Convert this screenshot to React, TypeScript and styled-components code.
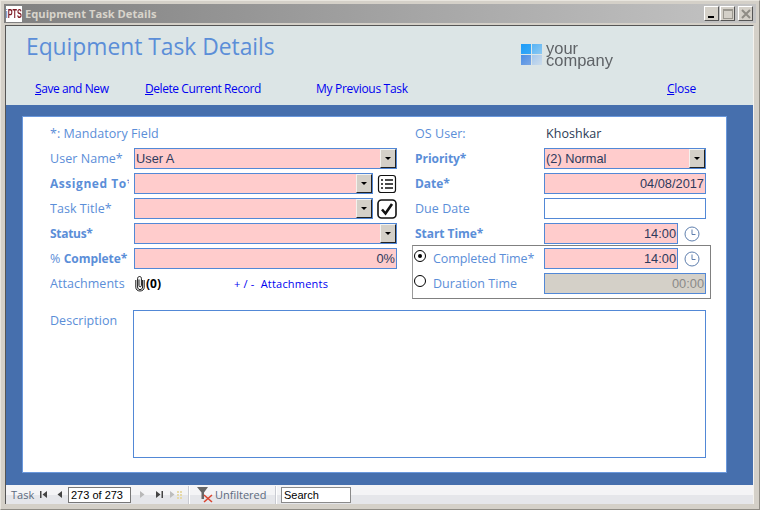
import React from 'react';
import styled, { createGlobalStyle } from 'styled-components';

const GlobalStyle = createGlobalStyle`
  html, body {
    margin: 0;
    padding: 0;
    background: #d4d0c8;
  }
`;

const uiFont = `"Open Sans", "Noto Sans", sans-serif`;
const fieldFont = `"Liberation Sans", Arial, sans-serif`;
const labelBlue = '#5b8ed8';
const fieldBorder = '#5288d6';

const Window = styled.div`
  width: 760px;
  height: 510px;
  box-sizing: border-box;
  display: flex;
  flex-direction: column;
  background: #d4d0c8;
  border: 1px solid #8f8c85;
  border-top-color: #e8e5de;
  border-left-color: #e8e5de;
  padding: 3px 3px 5px 3px;
  overflow: hidden;
`;

const TitleBar = styled.div`
  height: 19px;
  flex: none;
  display: flex;
  align-items: center;
  padding: 0 3px 0 2px;
  background: linear-gradient(90deg, #808080, #c4c4c4);
`;

const AppIcon = styled.div`
  width: 16px;
  height: 16px;
  flex: none;
  background: #fff;
  color: #7a1420;
  font: 700 11px/16px ${fieldFont};
  text-align: center;
  overflow: hidden;
  white-space: nowrap;
  display: flex;
  justify-content: center;
`;

const AppIconText = styled.span`
  display: inline-block;
  flex: none;
  transform: scale(0.66, 1.1);
  b {
    color: #1c4fa8;
    font-weight: 400;
  }
`;

const WindowTitle = styled.div`
  margin-left: 3px;
  color: #d8d4cb;
  font: 700 11.2px/19px "Open Sans", sans-serif;
  flex: 1;
`;

const WindowButton = styled.div<{ $gap?: number }>`
  width: 15px;
  height: 15px;
  margin-left: ${(p) => p.$gap ?? 0}px;
  box-sizing: border-box;
  background: #d4d0c8;
  border: 1px solid;
  border-color: #fff #555 #555 #fff;
  display: flex;
  align-items: center;
  justify-content: center;
`;

const Frame = styled.div`
  flex: 1;
  min-height: 0;
  margin: 2px 2px 0 1px;
  display: flex;
  flex-direction: column;
  border-top: 1px solid #555;
  border-left: 1px solid #555;
  border-right: 1px solid #f4f2ee;
`;

const Header = styled.header`
  height: 79px;
  flex: none;
  box-sizing: border-box;
  background: #dce5e6;
  display: flex;
  flex-direction: column;
`;

const HeaderTop = styled.div`
  height: 47px;
  flex: none;
  display: flex;
  padding-left: 20px;
`;

const PageTitle = styled.h1`
  margin: 0;
  width: 495px;
  flex: none;
  color: #5b8ed8;
  font: 400 22.8px/42px ${uiFont};
`;

const Logo = styled.div`
  display: flex;
  align-items: center;
  gap: 4px;
  margin-top: 13px;
  height: 30px;
  filter: blur(0.35px);
`;

const LogoMark = styled.div`
  display: grid;
  grid-template-columns: 10px 10px;
  grid-template-rows: 10px 10px;
  gap: 1px;
  width: 21px;
`;

const LogoCell = styled.span<{ $from: string; $to: string }>`
  background: linear-gradient(135deg, ${(p) => p.$from}, ${(p) => p.$to});
`;

const LogoText = styled.div`
  width: 68px;
  color: #5f6367;
  font: 400 16.5px/12.5px ${fieldFont};
`;

const Nav = styled.nav`
  display: grid;
  grid-template-columns: 110px 171px 351px auto;
  padding: 6px 0 0 29px;
`;

const NavLink = styled.a<{ $spacing?: number }>`
  color: #0000f0;
  font: 400 12px/20px ${uiFont};
  letter-spacing: ${(p) => p.$spacing ?? -0.43}px;
  white-space: nowrap;
  cursor: pointer;
  u {
    text-decoration: underline;
  }
`;

const Body = styled.main`
  flex: 1;
  min-height: 0;
  background: #466fad;
  padding: 11px 26px 12px 16px;
`;

const Card = styled.section`
  height: 100%;
  box-sizing: border-box;
  background: #fff;
  border: 1px solid #6a98dc;
  padding: 6px 20px 14px 27px;
  display: flex;
  flex-direction: column;
`;

const Columns = styled.div`
  display: grid;
  grid-template-columns: 347px 291px;
  column-gap: 18px;
`;

const Column = styled.div`
  display: flex;
  flex-direction: column;
  gap: 4px;
`;

const Row = styled.div`
  height: 21px;
  display: flex;
  align-items: center;
`;

const Label = styled.div<{ $w: number; $bold?: boolean; $spacing?: number }>`
  width: ${(p) => p.$w}px;
  flex: none;
  overflow: hidden;
  white-space: nowrap;
  color: ${labelBlue};
  font: ${(p) => (p.$bold ? '700 12px' : '400 12.5px')}/21px ${uiFont};
  letter-spacing: ${(p) => p.$spacing ?? (p.$bold ? -0.05 : 0.05)}px;
  b {
    font-size: 12px;
    letter-spacing: -0.05px;
  }
`;

const Field = styled.div<{ $fill?: string; $right?: boolean; $w?: number; $muted?: boolean }>`
  box-sizing: border-box;
  height: 21px;
  ${(p) => (p.$w ? `width: ${p.$w}px; flex: none;` : 'flex: 1;')}
  min-width: 0;
  display: flex;
  align-items: center;
  justify-content: ${(p) => (p.$right ? 'flex-end' : 'flex-start')};
  background: ${(p) => p.$fill ?? '#ffcccc'};
  border: 1px solid ${fieldBorder};
  padding: 0 0 0 1px;
  padding-right: ${(p) => (p.$right ? 1 : 0)}px;
  color: ${(p) => (p.$muted ? '#8a8a88' : '#2e3a5c')};
  font: 400 12.8px/19px ${fieldFont};
  position: relative;
`;

const ComboButton = styled.div`
  position: absolute;
  top: 0;
  right: 0;
  width: 16px;
  height: 19px;
  box-sizing: border-box;
  background: #d4d0c8;
  border-right: 1px solid #222;
  border-bottom: 1px solid #222;
  border-top: 1px solid #f4f2ee;
  border-left: 1px solid #f4f2ee;
  display: flex;
  align-items: center;
  justify-content: center;
  &::after {
    content: '';
    width: 0;
    height: 0;
    border-left: 3px solid transparent;
    border-right: 3px solid transparent;
    border-top: 3px solid #000;
  }
`;

const SideIcon = styled.svg`
  flex: none;
  margin-left: 4px;
  display: block;
`;

const ClockSlot = styled.svg`
  flex: none;
  margin-left: 6px;
  display: block;
`;

const ReadOnly = styled.div`
  margin-left: 2px;
  color: #2b3a55;
  font: 400 12.5px/21px ${uiFont};
  letter-spacing: 0.05px;
`;

const AttachCount = styled.div`
  width: 100px;
  flex: none;
  display: flex;
  align-items: center;
  color: #000;
  font: 700 12px/21px ${uiFont};
`;

const AttachLink = styled.a`
  color: #0000f0;
  font: 400 11px/21px ${uiFont};
  white-space: pre;
  letter-spacing: 0.2px;
`;

const TimeGroup = styled.div`
  margin: -3px -5px 0 -3px;
  padding: 2px 4px 4px 1px;
  border: 1px solid #808080;
  border-left-color: #9a9a9a;
  display: flex;
  flex-direction: column;
  gap: 4px;
`;

const Radio = styled.span<{ $on?: boolean }>`
  width: 12px;
  height: 12px;
  flex: none;
  box-sizing: border-box;
  margin: -6px 7px 0 0;
  border-radius: 50%;
  border: 1px solid #000;
  background: #fff;
  display: flex;
  align-items: center;
  justify-content: center;
  &::after {
    content: '';
    width: 4px;
    height: 4px;
    border-radius: 50%;
    background: ${(p) => (p.$on ? '#000' : 'transparent')};
  }
`;

const DescriptionRow = styled.div`
  margin-top: 11px;
  display: flex;
  flex: 1;
  min-height: 0;
`;

const DescriptionBox = styled.div`
  flex: none;
  width: 573px;
  box-sizing: border-box;
  border: 1px solid ${fieldBorder};
  background: #fff;
`;

const Footer = styled.footer`
  height: 19px;
  flex: none;
  display: flex;
  align-items: center;
  background: linear-gradient(180deg, #f4f4f6 0 50%, #e5e6ea 50% 100%);
  color: #5c6a7e;
  font: 400 11px/19px ${uiFont};
`;

const FooterLabel = styled.span`
  margin-left: 5px;
  width: 28px;
  flex: none;
`;

const NavIcon = styled.svg<{ $w?: number }>`
  width: ${(p) => p.$w ?? 9}px;
  height: 9px;
  flex: none;
  display: block;
`;

const RecordBox = styled.div<{ $w: number; $border: string }>`
  box-sizing: border-box;
  width: ${(p) => p.$w}px;
  height: 16px;
  flex: none;
  background: #fff;
  border: 1px solid ${(p) => p.$border};
  color: #000;
  font: 400 11px/14px ${fieldFont};
  padding-left: 2px;
`;

const FooterDivider = styled.span`
  width: 1px;
  height: 18px;
  flex: none;
  background: #c9cbd2;
  border-right: 1px solid #fff;
`;

const FilterText = styled.span`
  width: 60px;
  flex: none;
`;

const FilterIcon = styled.svg`
  flex: none;
  display: block;
`;

const Spacer = styled.span<{ $w: number }>`
  width: ${(p) => p.$w}px;
  height: 1px;
  flex: none;
`;

const Clock = () => (
  <ClockSlot width="16" height="16" viewBox="0 0 16 16" fill="none" stroke="#5f7fae" strokeWidth="1">
    <circle cx="8" cy="8" r="7" />
    <path d="M8 3.5V8.5H11.5" />
  </ClockSlot>
);

const Combo = ({ value }: { value?: string }) => (
  <Field>
    {value}
    <ComboButton />
  </Field>
);

function App() {
  return (
    <>
      <GlobalStyle />
      <Window>
        <TitleBar>
          <AppIcon>
            <AppIconText>
              <b>i</b>PTS
            </AppIconText>
          </AppIcon>
          <WindowTitle>Equipment Task Details</WindowTitle>
          <WindowButton>
            <svg width="9" height="9" viewBox="0 0 9 9">
              <rect x="1" y="7" width="6" height="2" fill="#000" />
            </svg>
          </WindowButton>
          <WindowButton $gap={1}>
            <svg width="10" height="10" viewBox="0 0 10 10" fill="none" stroke="#9a978f">
              <rect x="0.5" y="0.5" width="9" height="9" />
              <path d="M0 1.5H10" />
            </svg>
          </WindowButton>
          <WindowButton $gap={3}>
            <svg width="10" height="10" viewBox="0 0 10 10" stroke="#8f8c85" strokeWidth="2">
              <path d="M1 1L9 9M9 1L1 9" />
            </svg>
          </WindowButton>
        </TitleBar>
        <Frame>
          <Header>
            <HeaderTop>
              <PageTitle>Equipment Task Details</PageTitle>
              <Logo>
                <LogoMark>
                  <LogoCell $from="#1e9cf8" $to="#38a8f6" />
                  <LogoCell $from="#58b4f5" $to="#8cc8f2" />
                  <LogoCell $from="#4a8ee6" $to="#7ba6e4" />
                  <LogoCell $from="#a4c8ee" $to="#cddcea" />
                </LogoMark>
                <LogoText>your company</LogoText>
              </Logo>
            </HeaderTop>
            <Nav>
              <NavLink>
                <u>S</u>ave and New
              </NavLink>
              <NavLink>
                <u>D</u>elete Current Record
              </NavLink>
              <NavLink $spacing={-0.3}>My Previous Task</NavLink>
              <NavLink $spacing={-0.25}>
                <u>C</u>lose
              </NavLink>
            </Nav>
          </Header>
          <Body>
            <Card>
              <Columns>
                <Column>
                  <Row>
                    <Label $w={200}>*: Mandatory Field</Label>
                  </Row>
                  <Row>
                    <Label $w={84}>User Name*</Label>
                    <Combo value="User A" />
                  </Row>
                  <Row>
                    <Label $w={79} $bold $spacing={0.55}>
                      Assigned To*
                    </Label>
                    <Spacer $w={5} />
                    <Combo />
                    <SideIcon width="20" height="20" viewBox="0 0 20 20" fill="none" stroke="#111">
                      <rect x="1.5" y="1.5" width="17" height="17" rx="2.5" strokeWidth="1.2" />
                      <path d="M4 6H6M8 6H16M4 10H6M8 10H16M4 14H6M8 14H16" strokeWidth="1.5" />
                    </SideIcon>
                  </Row>
                  <Row>
                    <Label $w={84}>Task Title*</Label>
                    <Combo />
                    <SideIcon width="20" height="20" viewBox="0 0 20 20" fill="none" stroke="#111">
                      <rect x="1" y="1" width="18" height="18" rx="3.5" strokeWidth="1.6" />
                      <path d="M5 10.5L8.5 14.5L15 5" strokeWidth="2.6" />
                    </SideIcon>
                  </Row>
                  <Row>
                    <Label $w={84} $bold $spacing={-0.3}>
                      Status*
                    </Label>
                    <Combo />
                  </Row>
                  <Row>
                    <Label $w={84}>
                      % <b>Complete*</b>
                    </Label>
                    <Field $right>0%</Field>
                  </Row>
                  <Row>
                    <Label $w={84}>Attachments</Label>
                    <AttachCount>
                      <svg width="12" height="17" viewBox="0 0 12 17" fill="none" stroke="#000" strokeWidth="0.9">
                        <path d="M5 4.5V10.5C5 11.3 5.5 11.8 6.2 11.8C6.9 11.8 7.4 11.3 7.4 10.5V3.5C7.4 2.3 6.7 1.5 5.6 1.5C4.5 1.5 3.6 2.3 3.6 3.5V12C3.6 13.6 4.6 14.6 6 14.6C7.4 14.6 8.6 13.6 8.6 12V5" />
                        <path d="M1.8 5V12.2C1.8 14.6 3.6 16 6 16C8.4 16 10.2 14.6 10.2 12.2V5" />
                      </svg>
                      (0)
                    </AttachCount>
                    <AttachLink>{'+ / -  Attachments'}</AttachLink>
                  </Row>
                </Column>
                <Column>
                  <Row>
                    <Label $w={129}>OS User:</Label>
                    <ReadOnly>Khoshkar</ReadOnly>
                  </Row>
                  <Row>
                    <Label $w={129} $bold>
                      Priority*
                    </Label>
                    <Combo value="(2) Normal" />
                  </Row>
                  <Row>
                    <Label $w={129} $bold>
                      Date*
                    </Label>
                    <Field $right>04/08/2017</Field>
                  </Row>
                  <Row>
                    <Label $w={129}>Due Date</Label>
                    <Field $fill="#fff" />
                  </Row>
                  <Row>
                    <Label $w={129} $bold>
                      Start Time*
                    </Label>
                    <Field $right $w={134}>
                      14:00
                    </Field>
                    <Clock />
                  </Row>
                  <TimeGroup>
                    <Row>
                      <Radio $on />
                      <Label $w={111} $spacing={-0.1}>
                        Completed Time*
                      </Label>
                      <Field $right $w={134}>
                        14:00
                      </Field>
                      <Clock />
                    </Row>
                    <Row>
                      <Radio />
                      <Label $w={111}>Duration Time</Label>
                      <Field $right $fill="#d4d0c8" $muted>
                        00:00
                      </Field>
                    </Row>
                  </TimeGroup>
                </Column>
              </Columns>
              <DescriptionRow>
                <Label $w={83}>Description</Label>
                <DescriptionBox />
              </DescriptionRow>
            </Card>
          </Body>
          <Footer>
            <FooterLabel>Task</FooterLabel>
            <NavIcon viewBox="0 0 9 9" fill="#444">
              <rect x="1" y="1" width="1.5" height="7" />
              <path d="M8 1V8L3.5 4.5Z" />
            </NavIcon>
            <Spacer $w={9} />
            <NavIcon $w={5} viewBox="0 0 5 9" fill="#444">
              <path d="M5 1V8L0.5 4.5Z" />
            </NavIcon>
            <Spacer $w={6} />
            <RecordBox $w={63} $border="#777">
              273 of 273
            </RecordBox>
            <Spacer $w={9} />
            <NavIcon $w={5} viewBox="0 0 5 9" fill="#b8b8b8">
              <path d="M0 1V8L4.5 4.5Z" />
            </NavIcon>
            <Spacer $w={10} />
            <NavIcon viewBox="0 0 9 9" fill="#444">
              <path d="M1 1V8L5.5 4.5Z" />
              <rect x="6.5" y="1" width="1.5" height="7" />
            </NavIcon>
            <Spacer $w={6} />
            <NavIcon $w={14} viewBox="0 0 14 9" fill="#bdbdbd">
              <path d="M0 1V8L4.5 4.5Z" />
              <g fill="#e6d9a8">
                <rect x="7" y="1" width="2" height="2" />
                <rect x="10" y="1" width="2" height="2" />
                <rect x="7" y="4" width="2" height="2" />
                <rect x="10" y="4" width="2" height="2" />
                <rect x="7" y="7" width="2" height="2" />
                <rect x="10" y="7" width="2" height="2" />
              </g>
            </NavIcon>
            <Spacer $w={4} />
            <FooterDivider />
            <Spacer $w={7} />
            <FilterIcon width="17" height="17" viewBox="0 0 17 17">
              <path d="M0 1H11L7 6.5V13H4.5V6.5Z" fill="#666" />
              <path d="M7 9L15 16M15 9L7 16" stroke="#d9452f" strokeWidth="1.6" />
            </FilterIcon>
            <Spacer $w={1} />
            <FilterText>Unfiltered</FilterText>
            <FooterDivider />
            <Spacer $w={4} />
            <RecordBox $w={70} $border="#8a8a8a">
              Search
            </RecordBox>
          </Footer>
        </Frame>
      </Window>
    </>
  );
}

export default App;
